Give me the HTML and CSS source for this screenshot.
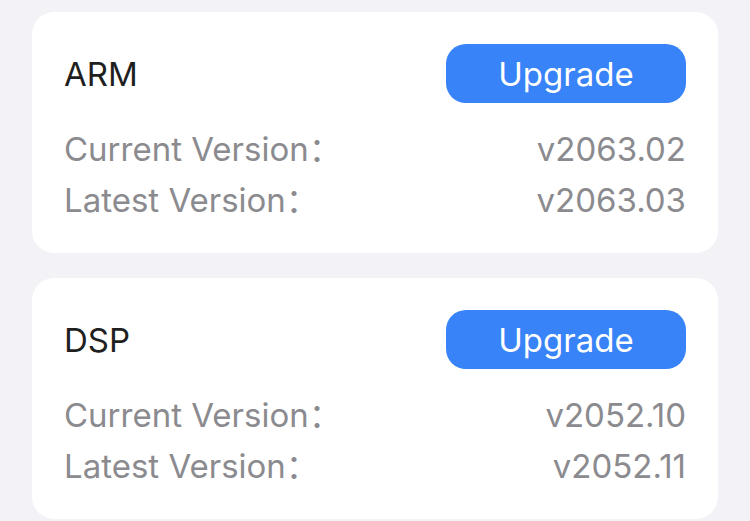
FILE: index.html
```html
<!DOCTYPE html>
<html lang="en">
<head>
  <meta charset="UTF-8" />
  <title>Firmware Upgrade</title>
  <link rel="stylesheet" href="styles.css">
</head>
<body>
  <div class="list">
    <div class="fw-card">
      <div class="fw-head">
        <span class="fw-name">ARM</span>
        <button class="upgrade-btn">Upgrade</button>
      </div>
      <div class="fw-row">
        <span>Current Version：</span>
        <span>v2063.02</span>
      </div>
      <div class="fw-row">
        <span>Latest Version：</span>
        <span>v2063.03</span>
      </div>
    </div>
    <div class="fw-card">
      <div class="fw-head">
        <span class="fw-name">DSP</span>
        <button class="upgrade-btn">Upgrade</button>
      </div>
      <div class="fw-row">
        <span>Current Version：</span>
        <span>v2052.10</span>
      </div>
      <div class="fw-row">
        <span>Latest Version：</span>
        <span>v2052.11</span>
      </div>
    </div>
  </div>
</body>
</html>
```

FILE: styles.css
```css
body {
  margin: 0;
  background: #f2f2f7;
  font-family: Inter, "Noto Sans CJK SC", sans-serif;
}
.list {
  display: flex;
  flex-direction: column;
  gap: 25px;
  padding: 12px 32px 0 32px;
}
.fw-card {
  background: #fff;
  border-radius: 22px;
  padding: 32px 32px 27px 32px;
}
.fw-head {
  display: flex;
  justify-content: space-between;
  align-items: center;
  margin-bottom: 21px;
}
.fw-name {
  font-size: 33px;
  color: #1f1f21;
}
.upgrade-btn {
  width: 240px;
  height: 59px;
  border: none;
  border-radius: 20px;
  background: #3783f7;
  color: #fff;
  font-family: inherit;
  font-size: 33px;
  padding: 0;
}
.fw-row {
  display: flex;
  justify-content: space-between;
  font-size: 33px;
  line-height: 51px;
  color: #8b8b8f;
}
```
